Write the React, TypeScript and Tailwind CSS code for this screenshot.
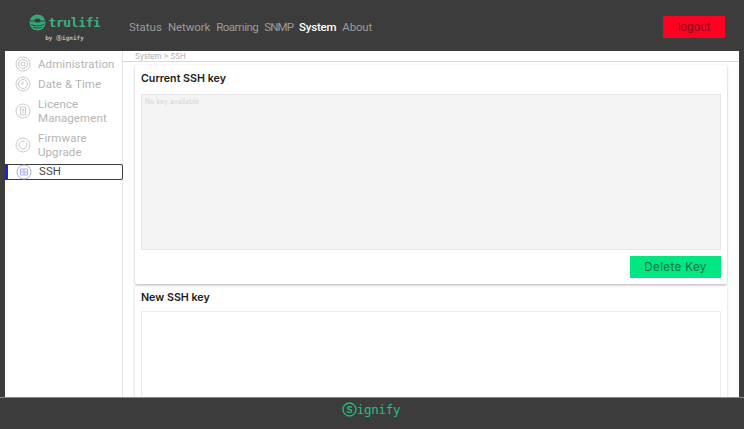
import React from 'react';

const font = "font-['Inter','Liberation_Sans',sans-serif]";
const roboto = "font-['Roboto','Liberation_Sans',sans-serif]";

const Ring: React.FC<{ inner?: React.ReactNode; color?: string }> = ({ inner, color = '#c9c9c9' }) => (
    <svg width="16" height="16" viewBox="0 0 16 16" fill="none" stroke={color} strokeWidth="1">
        <circle cx="8" cy="8" r="7" />
        {inner}
    </svg>
);

const SideItem: React.FC<{ lines: string[]; icon: React.ReactNode; h: string }> = ({ lines, icon, h }) => (
    <div className={`flex items-center pl-[10px] ${h}`}>
        <div className="w-[16px] h-[16px] shrink-0">{icon}</div>
        <div className={`ml-[7px] text-[11.5px] leading-[14px] tracking-[0.1px] text-[#b4b4b4] ${roboto}`}>
            {lines.map((l) => <div key={l}>{l}</div>)}
        </div>
    </div>
);

const App: React.FC = () => {
    return (
        <div className={`h-screen w-full flex flex-col overflow-hidden bg-[#3c3c3c] ${font}`}>
            <header className="h-[51px] shrink-0 flex items-center">
                <div className="w-[129px] shrink-0 flex flex-col items-center mt-[5px]">
                    <div className="flex items-center gap-[3px]">
                        <svg width="17" height="17" viewBox="0 0 17 17">
                            <circle cx="8.5" cy="8.5" r="8" fill="#35a877" />
                            <path d="M1 7h15M2 10c3 2.500 10 2.500 13 0M4 13c2 1.500 7 1.500 9 0" stroke="#3c3c3c" strokeWidth="1" fill="none" />
                            <ellipse cx="8.500" cy="6.500" rx="3" ry="2" fill="#3c3c3c" />
                        </svg>
                        <span className="font-['DejaVu_Sans_Mono',monospace] text-[13px] leading-[17px] font-bold text-[#3fae80] tracking-[-0.4px]">trulifi</span>
                    </div>
                    <div className="font-['DejaVu_Sans_Mono',monospace] text-[6px] leading-[8px] mt-[3px] font-bold text-[#b9b9b9]">by ⓢignify</div>
                </div>
                <nav className={`flex items-center gap-[6px] text-[11.500px] text-[#9b9b9b] mt-[5px] ${roboto}`}>
                    <span>Status</span>
                    <span className="tracking-[-0.1px]">Network</span>
                    <span className="tracking-[-0.5px]">Roaming</span>
                    <span className="tracking-[-0.9px]">SNMP</span>
                    <span className="font-medium text-white tracking-[-0.2px]">System</span>
                    <span className="tracking-[-0.2px]">About</span>
                </nav>
                <button className="ml-auto mr-[19px] w-[62px] h-[22px] pt-[2px] bg-[#ff0022] text-[11px] text-[#7c0a1a] mt-[2px]">logout</button>
            </header>

            <div className="flex-1 min-h-0 flex pl-[5px] pr-[5px]">
                <aside className="w-[118px] shrink-0 bg-white border-r border-[#e4e4e4] pt-[3px]">
                    <SideItem h="h-[20px]" lines={['Administration']} icon={
                        <Ring inner={<><circle cx="8" cy="8" r="4.500" /><circle cx="8" cy="8" r="2" /></>} />
                    } />
                    <SideItem h="h-[20px]" lines={['Date & Time']} icon={
                        <Ring inner={<><circle cx="8" cy="8" r="4.500" /><path d="M8 5.500V8H6" /></>} />
                    } />
                    <SideItem h="h-[34px]" lines={['Licence', 'Management']} icon={
                        <Ring inner={<path d="M5.500 4h5v8h-5zM7 6.500h2M8 6.500v4" />} />
                    } />
                    <SideItem h="h-[34px]" lines={['Firmware', 'Upgrade']} icon={
                        <Ring inner={<path d="M11.500 6a4 4 0 1 1-2-1.700" />} />
                    } />
                    <div className="relative mt-[2px] h-[16px] border border-[#3c3c3c] rounded-[2px] flex items-center pl-[10px] mr-[-1px]">
                        <div className="absolute -left-[1px] -top-[1px] w-[3px] h-[16px] bg-[#1a24d8]" />
                        <div className="w-[16px] h-[16px] shrink-0">
                            <Ring color="#a9aeea" inner={<path d="M4.500 5h7v6h-7zM4.500 8h7M8 5v6M6 6.500h.5M9.500 9.500h.5" />} />
                        </div>
                        <span className={`ml-[7px] text-[11.500px] tracking-[0.1px] text-[#4a4a4a] ${roboto}`}>SSH</span>
                    </div>
                </aside>

                <main className="flex-1 min-w-0 bg-white overflow-hidden">
                    <div className="h-[11px] border-b border-[#d8d8d8] pl-[12px] text-[7.500px] leading-[11px] text-[#a8a8a8]">System &gt; SSH</div>
                    <div className="ml-[12px] mr-[12px] pt-[3px]">
                        <section className="h-[219px] shadow-[0_1px_3px_rgba(0,0,0,0.28)] px-[6px] pt-[7px] rounded-[2px]">
                            <h2 className="text-[10.700px] leading-[14px] font-semibold text-[#1b1b1b]">Current SSH key</h2>
                            <div className="mt-[8px] h-[156px] bg-[#f4f4f4] border border-[#e6e6e6] px-[3px] py-[2px] text-[7px] leading-[10px] text-[#d4d4d4]">No key available</div>
                            <div className="flex justify-end mt-[6px]">
                                <button className="w-[91px] h-[22px] pt-[2px] bg-[#00e680] text-[11.500px] tracking-[0.4px] text-[#1e6b4e]">Delete Key</button>
                            </div>
                        </section>
                        <section className="mt-[2px] h-[200px] shadow-[0_1px_3px_rgba(0,0,0,0.2)] px-[6px] pt-[5px]">
                            <h2 className="text-[10.700px] leading-[14px] font-semibold text-[#1b1b1b]">New SSH key</h2>
                            <div className="mt-[6px] h-[160px] bg-white border border-[#ececec]" />
                        </section>
                    </div>
                </main>
            </div>

            <footer className="h-[32px] shrink-0 border-t border-[#8a8a8a] flex items-start justify-center pt-[4px] pr-[2px]">
                <div className="flex items-center">
                    <svg width="15" height="15" viewBox="0 0 15 15" fill="none" stroke="#1fc07f" strokeWidth="1.300">
                        <circle cx="7.500" cy="7.500" r="6.500" />
                        <path d="M10 5.500C9.300 4.500 5.500 4.300 5.400 6c0 2 4.400 1 4.300 3.200C9.600 10.800 6 10.700 5 9.500" />
                    </svg>
                    <span className="font-['DejaVu_Sans_Mono',monospace] text-[12.500px] leading-[15px] text-[#1fc07f] tracking-[-0.3px] font-medium">ignify</span>
                </div>
            </footer>
        </div>
    );
};

export default App;
